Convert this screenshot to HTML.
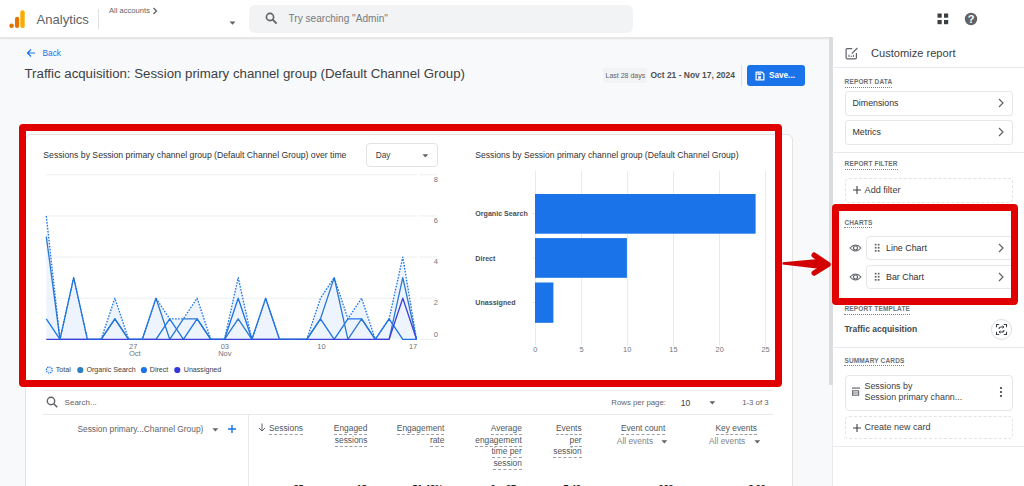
<!DOCTYPE html>
<html><head><meta charset="utf-8">
<style>
*{box-sizing:border-box;margin:0;padding:0}
html,body{width:1024px;height:486px;overflow:hidden;background:#f8f9fa;font-family:"Liberation Sans",sans-serif;color:#202124}
.a{position:absolute}
.t{position:absolute;white-space:nowrap;line-height:1}
#top{left:0;top:0;width:1024px;height:38px;background:#fff;border-bottom:1px solid #e6e6e6;box-shadow:0 1px 1.5px rgba(60,64,67,0.12)}
#card{left:25px;top:134px;width:768px;height:400px;background:#fff;border:1px solid #e3e3e3;border-radius:6px}
#panel{left:832px;top:37px;width:192px;height:449px;background:#fff}
.pcard{position:absolute;left:845px;width:168px;height:24.5px;border:1px solid #e6e6e6;border-radius:3px;background:#fff}
.dash{position:absolute;left:845px;width:168px;height:24.5px;border:1px dashed #e3e3e3;border-radius:4px}
.sec{position:absolute;font-size:6.5px;font-weight:700;letter-spacing:0.15px;color:#6b7075;line-height:1;white-space:nowrap;border-bottom:1px dotted #80868b;padding-bottom:1px}
.hd{position:absolute;font-size:8.4px;color:#50555a;line-height:11.6px;text-align:right;white-space:nowrap}
.hd span{border-bottom:1px dashed #9aa0a6;padding-bottom:1px}
</style></head><body>
<!-- top bar -->
<div id="top" class="a"></div>
<svg class="a" style="left:0;top:0" width="30" height="36">
  <circle cx="11.6" cy="25.8" r="2.3" fill="#e37400"/>
  <rect x="15" y="16.8" width="4.2" height="11.3" rx="2.1" fill="#e37400"/>
  <rect x="20.3" y="10.2" width="4.4" height="17.9" rx="2.2" fill="#f9ab00"/>
</svg>
<div class="t" style="left:36.5px;top:12.8px;font-size:13.1px;color:#5f6368">Analytics</div>
<div class="a" style="left:98px;top:9px;width:1px;height:20px;background:#e0e0e0"></div>
<div class="t" style="left:109px;top:6.5px;font-size:7.6px;color:#5f6368">All accounts</div>
<svg class="a" style="left:152px;top:6.5px" width="6" height="8"><path d="M1.5,1 L4.5,4 L1.5,7" fill="none" stroke="#5f6368" stroke-width="1.3"/></svg>
<svg class="a" style="left:228.6px;top:21px" width="8" height="5"><path d="M0.5,0.5 L6.5,0.5 L3.5,3.7 Z" fill="#5f6368"/></svg>
<div class="a" style="left:249px;top:5px;width:384px;height:28px;background:#f1f3f4;border-radius:6px"></div>
<svg class="a" style="left:265px;top:12px" width="13" height="13"><circle cx="5" cy="5" r="3.6" fill="none" stroke="#5f6368" stroke-width="1.6"/><path d="M7.7,7.7 L11.6,11.6" stroke="#5f6368" stroke-width="1.8"/></svg>
<div class="t" style="left:288.5px;top:13.5px;font-size:10.1px;color:#757a80">Try searching "Admin"</div>
<svg class="a" style="left:936.6px;top:13px" width="12" height="12" fill="#3c4043"><rect x="0.5" y="0.5" width="4.2" height="4.2"/><rect x="7" y="0.5" width="4.2" height="4.2"/><rect x="0.5" y="7" width="4.2" height="4.2"/><rect x="7" y="7" width="4.2" height="4.2"/></svg>
<svg class="a" style="left:964px;top:12px" width="14" height="14"><circle cx="7" cy="7" r="6.2" fill="#5f6368"/><text x="7" y="11" text-anchor="middle" font-size="11" font-weight="700" fill="#fff" font-family="Liberation Sans">?</text></svg>

<!-- header -->
<svg class="a" style="left:26px;top:47.8px" width="10" height="10"><path d="M9,5 L1.5,5 M5,1.5 L1.5,5 L5,8.5" fill="none" stroke="#1a73e8" stroke-width="1.2"/></svg>
<div class="t" style="left:42.5px;top:48.9px;font-size:8.3px;color:#1a73e8">Back</div>
<div class="t" style="left:24.5px;top:66.5px;font-size:13.25px;color:#3c4043">Traffic acquisition: Session primary channel group (Default Channel Group)</div>
<div class="a" style="left:603px;top:68px;width:44px;height:14.5px;background:#f1f3f4;border-radius:2px"></div>
<div class="t" style="left:605.5px;top:72.3px;font-size:7px;color:#5f6368">Last 28 days</div>
<div class="t" style="left:650.5px;top:71.2px;font-size:8.45px;font-weight:700;color:#4d5156">Oct 21 - Nov 17, 2024</div>
<div class="a" style="left:741px;top:65px;width:1px;height:21px;background:#e0e0e0"></div>
<div class="a" style="left:747px;top:65px;width:57.5px;height:21px;background:#1a73e8;border-radius:3px"></div>
<svg class="a" style="left:754.5px;top:70.5px" width="10" height="10"><path d="M1.1,1.1 H7 L8.9,3 V8.9 H1.1 Z" fill="none" stroke="#fff" stroke-width="1.25" stroke-linejoin="round"/><rect x="2.3" y="2.3" width="4" height="1.6" fill="#fff"/><rect x="3.1" y="5.2" width="2.8" height="2.6" fill="#fff"/></svg>
<div class="t" style="left:769px;top:71.6px;font-size:8.2px;font-weight:700;color:#fff">Save...</div>

<!-- main card -->
<div id="card" class="a"></div>
<div class="t" style="left:43.3px;top:151px;font-size:8.66px;color:#303134">Sessions by Session primary channel group (Default Channel Group) over time</div>
<div class="a" style="left:366px;top:143.3px;width:71.5px;height:23.7px;border:1px solid #e3e3e3;border-radius:4px;background:#fff"></div>
<div class="t" style="left:375.7px;top:151px;font-size:8.3px;color:#3c4043">Day</div>
<svg class="a" style="left:422px;top:154px" width="7" height="4"><path d="M0.5,0.3 L6.2,0.3 L3.35,3.5 Z" fill="#5f6368"/></svg>

<svg class="a" style="left:0;top:0" width="1024" height="486">
  <g stroke="#eceef0" stroke-width="1">
    <path d="M46,174.8 H417 M419.5,174.8 H437 M46,215.9 H417 M419.5,215.9 H437 M46,257 H417 M419.5,257 H437 M46,298.2 H417 M419.5,298.2 H437 M419.5,339.5 H437"/>
  </g>
  <path d="M46.3,216.0 L60.0,339.3 L73.7,277.6 L87.4,339.3 L101.1,339.3 L114.9,298.2 L128.6,339.3 L142.3,339.3 L156.0,298.2 L169.7,318.8 L183.4,318.8 L197.1,298.2 L210.8,339.3 L224.5,339.3 L238.2,277.6 L251.9,339.3 L265.7,298.2 L279.4,339.3 L293.1,339.3 L306.8,339.3 L320.5,298.2 L334.2,277.6 L347.9,318.8 L361.6,298.2 L375.3,339.3 L389.1,318.8 L402.8,257.1 L416.5,339.3 L416.5,339.3 L46.3,339.3 Z" fill="#e8f0fe" fill-opacity="0.75"/>
  <g fill="none" stroke-width="1.3" stroke-linejoin="round">
  <path stroke="#1a73e8" d="M46.3,318.8 L60.0,339.3 L73.7,339.3 L87.4,339.3 L101.1,339.3 L114.9,318.8 L128.6,339.3 L142.3,339.3 L156.0,339.3 L169.7,318.8 L183.4,339.3 L197.1,318.8 L210.8,339.3 L224.5,339.3 L238.2,298.2 L251.9,339.3 L265.7,339.3 L279.4,339.3 L293.1,339.3 L306.8,339.3 L320.5,318.8 L334.2,339.3 L347.9,318.8 L361.6,318.8 L375.3,339.3 L389.1,318.8 L402.8,339.3 L416.5,339.3"/>
  <path stroke="#2a78cf" d="M46.3,236.6 L60.0,339.3 L73.7,277.6 L87.4,339.3 L101.1,339.3 L114.9,318.8 L128.6,339.3 L142.3,339.3 L156.0,298.2 L169.7,339.3 L183.4,318.8 L197.1,318.8 L210.8,339.3 L224.5,339.3 L238.2,318.8 L251.9,339.3 L265.7,298.2 L279.4,339.3 L293.1,339.3 L306.8,339.3 L320.5,318.8 L334.2,277.6 L347.9,339.3 L361.6,318.8 L375.3,339.3 L389.1,339.3 L402.8,277.6 L416.5,339.3"/>
  <path stroke="#3d3fd8" d="M46.3,339.3 L389.1,339.3 L402.8,298.2 L416.5,339.3"/>
  <path stroke="#1a73e8" stroke-dasharray="1.6 1.4" d="M46.3,216.0 L60.0,339.3 L73.7,277.6 L87.4,339.3 L101.1,339.3 L114.9,298.2 L128.6,339.3 L142.3,339.3 L156.0,298.2 L169.7,318.8 L183.4,318.8 L197.1,298.2 L210.8,339.3 L224.5,339.3 L238.2,277.6 L251.9,339.3 L265.7,298.2 L279.4,339.3 L293.1,339.3 L306.8,339.3 L320.5,298.2 L334.2,277.6 L347.9,318.8 L361.6,298.2 L375.3,339.3 L389.1,318.8 L402.8,257.1 L416.5,339.3"/>
  </g>
  <g font-family="Liberation Sans" font-size="7.5" fill="#70757a">
    <text x="438" y="181.7" text-anchor="end">8</text>
    <text x="438" y="222.7" text-anchor="end">6</text>
    <text x="438" y="263.9" text-anchor="end">4</text>
    <text x="438" y="305.1" text-anchor="end">2</text>
    <text x="438" y="337.4" text-anchor="end">0</text>
    <text x="129" y="349.1">27</text>
    <text x="129" y="356.3">Oct</text>
    <text x="224.8" y="349.1" text-anchor="middle">03</text>
    <text x="224.8" y="356.3" text-anchor="middle">Nov</text>
    <text x="321.4" y="349.1" text-anchor="middle">10</text>
    <text x="417.3" y="349.1" text-anchor="end">17</text>
  </g>
  <!-- bar chart -->
  <g stroke="#e8eaed" stroke-width="1">
    <path d="M535.5,171 V345.5 M581.5,171 V345.5 M627.5,171 V345.5 M673.5,171 V345.5 M719.5,171 V345.5 M765.5,171 V345.5"/>
    <path d="M531.5,213.5 H535 M531.5,258 H535 M531.5,302.5 H535"/>
  </g>
  <g fill="#1a73e8">
    <rect x="535" y="194" width="220.6" height="39.7"/>
    <rect x="535" y="238.1" width="91.9" height="39.7"/>
    <rect x="535" y="282.5" width="18.4" height="40.3"/>
  </g>
  <g font-family="Liberation Sans" font-size="7.4" fill="#70757a" text-anchor="middle">
    <text x="535.4" y="352.2">0</text><text x="581.5" y="352.2">5</text><text x="627.2" y="352.2">10</text><text x="673.4" y="352.2">15</text><text x="719.7" y="352.2">20</text><text x="765.6" y="352.2">25</text>
  </g>
  <g font-family="Liberation Sans" font-size="7.1" font-weight="700" fill="#4a4e53">
    <text x="475.3" y="216">Organic Search</text>
    <text x="475.3" y="260.6">Direct</text>
    <text x="475.3" y="305">Unassigned</text>
  </g>
</svg>
<div class="t" style="left:475.3px;top:151px;font-size:8.6px;color:#303134">Sessions by Session primary channel group (Default Channel Group)</div>

<!-- legend -->
<svg class="a" style="left:44px;top:364px" width="150" height="12">
  <circle cx="5.3" cy="6" r="3" fill="#e8f0fe" stroke="#1a73e8" stroke-width="1.2" stroke-dasharray="1.4 0.9"/>
  <circle cx="36.3" cy="6" r="3.1" fill="#2a7ec2"/>
  <circle cx="99.9" cy="6" r="3.1" fill="#1a73e8"/>
  <circle cx="133.3" cy="6" r="3.1" fill="#3535e0"/>
</svg>
<div class="t" style="left:55.8px;top:366.5px;font-size:7.1px;color:#3c4043">Total</div>
<div class="t" style="left:86.4px;top:366.5px;font-size:7.1px;color:#3c4043">Organic Search</div>
<div class="t" style="left:149.8px;top:366.5px;font-size:7.1px;color:#3c4043">Direct</div>
<div class="t" style="left:183.8px;top:366.5px;font-size:7.1px;color:#3c4043">Unassigned</div>

<!-- table -->
<div class="a" style="left:43px;top:390px;width:730px;height:1px;background:#e8eaed"></div>
<div class="a" style="left:43px;top:414px;width:730px;height:1px;background:#e8eaed"></div>
<div class="a" style="left:248px;top:415px;width:1px;height:80px;background:#e8eaed"></div>
<svg class="a" style="left:46px;top:396px" width="13" height="13"><circle cx="5" cy="5" r="3.7" fill="none" stroke="#5f6368" stroke-width="1.4"/><path d="M7.7,7.7 L11.3,11.3" stroke="#5f6368" stroke-width="1.6"/></svg>
<div class="t" style="left:64.6px;top:398.5px;font-size:8px;color:#5f6368">Search...</div>
<div class="t" style="left:611.3px;top:399.2px;font-size:7.8px;color:#5f6368">Rows per page:</div>
<div class="t" style="left:680.7px;top:398.6px;font-size:8.6px;color:#3c4043">10</div>
<svg class="a" style="left:709px;top:400.5px" width="7" height="4"><path d="M0.5,0.3 L6.2,0.3 L3.35,3.5 Z" fill="#5f6368"/></svg>
<div class="t" style="left:742.2px;top:399.2px;font-size:7.8px;color:#5f6368">1-3 of 3</div>

<div class="t" style="left:77.4px;top:425.3px;font-size:8.4px;color:#5f6368">Session primary...Channel Group)</div>
<svg class="a" style="left:211.5px;top:428px" width="7" height="4"><path d="M0.5,0.3 L6.2,0.3 L3.35,3.5 Z" fill="#5f6368"/></svg>
<svg class="a" style="left:227px;top:424px" width="10" height="10"><path d="M5,1 V9 M1,5 H9" stroke="#1a73e8" stroke-width="1.4"/></svg>

<svg class="a" style="left:258px;top:423px" width="8" height="9"><path d="M4,0.5 V8 M1,5 L4,8 L7,5" fill="none" stroke="#5f6368" stroke-width="1"/></svg>
<div class="hd" style="left:269px;top:423px;text-align:left"><span>Sessions</span></div>
<div class="hd" style="right:656.6px;top:423px">
<span>Engaged</span><br><span>sessions</span></div>
<div class="hd" style="right:579.7px;top:423px"><span>Engagement</span><br><span>rate</span></div>
<div class="hd" style="right:502.2px;top:423px"><span>Average</span><br><span>engagement</span><br><span>time per</span><br><span>session</span></div>
<div class="hd" style="right:442.4px;top:423px"><span>Events</span><br><span>per</span><br><span>session</span></div>
<div class="hd" style="left:621px;top:423px"><span>Event count</span></div>
<div class="t" style="left:616.8px;top:436.8px;font-size:8.4px;color:#80868b">All events</div>
<svg class="a" style="left:660.5px;top:439.5px" width="7" height="4"><path d="M0.5,0.3 L6.2,0.3 L3.35,3.5 Z" fill="#5f6368"/></svg>
<div class="hd" style="left:715.5px;top:423px"><span>Key events</span></div>
<div class="t" style="left:709px;top:436.8px;font-size:8.4px;color:#80868b">All events</div>
<svg class="a" style="left:753.5px;top:439.5px" width="7" height="4"><path d="M0.5,0.3 L6.2,0.3 L3.35,3.5 Z" fill="#5f6368"/></svg>
<div class="t" style="right:720.6px;top:484px;font-size:9px;font-weight:700;color:#202124">35</div>
<div class="t" style="right:657.3px;top:484px;font-size:9px;font-weight:700;color:#202124">18</div>
<div class="t" style="right:581.1px;top:484px;font-size:9px;font-weight:700;color:#202124">51.43%</div>
<div class="t" style="right:503px;top:484px;font-size:9px;font-weight:700;color:#202124">2m 27s</div>
<div class="t" style="right:443px;top:484px;font-size:9px;font-weight:700;color:#202124">7.49</div>
<div class="t" style="right:350.6px;top:484px;font-size:9px;font-weight:700;color:#202124">269</div>
<div class="t" style="right:258.3px;top:484px;font-size:9px;font-weight:700;color:#202124">3.00</div>

<!-- panel -->
<div id="panel" class="a"></div>
<div class="a" style="left:829px;top:37px;width:3.5px;height:348px;background:#dadce0"></div>
<div class="a" style="left:832px;top:385px;width:1px;height:101px;background:#e8eaed"></div>
<svg class="a" style="left:845px;top:47px" width="14" height="13"><path d="M7.2,1.6 H2.2 Q1.1,1.6 1.1,2.7 V10.8 Q1.1,11.9 2.2,11.9 H10.3 Q11.4,11.9 11.4,10.8 V6" fill="none" stroke="#5f6368" stroke-width="1.2"/><path d="M6.8,6.6 L12.4,1" stroke="#5f6368" stroke-width="1.2"/><path d="M4,10 V7.6 M6.2,10 V8.6 M8.4,10 V7.8" stroke="#5f6368" stroke-width="1"/></svg>
<div class="t" style="left:871px;top:47.9px;font-size:11.1px;color:#3c4043">Customize report</div>
<div class="a" style="left:832px;top:67px;width:192px;height:1px;background:#e8eaed"></div>
<div class="sec" style="left:844.6px;top:79.2px">REPORT DATA</div>
<div class="pcard" style="top:91px"></div>
<div class="t" style="left:852.5px;top:99.2px;font-size:8.8px;color:#303134">Dimensions</div>
<svg class="a" style="left:998px;top:97.5px" width="6" height="10"><path d="M1,1 L5,5 L1,9" fill="none" stroke="#5f6368" stroke-width="1.2"/></svg>
<div class="pcard" style="top:120px"></div>
<div class="t" style="left:852.5px;top:128.2px;font-size:8.8px;color:#303134">Metrics</div>
<svg class="a" style="left:998px;top:126.5px" width="6" height="10"><path d="M1,1 L5,5 L1,9" fill="none" stroke="#5f6368" stroke-width="1.2"/></svg>
<div class="a" style="left:832px;top:151.5px;width:192px;height:1px;background:#e8eaed"></div>
<div class="sec" style="left:844.6px;top:161.1px">REPORT FILTER</div>
<div class="dash" style="top:178px"></div>
<svg class="a" style="left:851.5px;top:185px" width="10" height="10"><path d="M5,1 V9 M1,5 H9" stroke="#3c4043" stroke-width="1.1"/></svg>
<div class="t" style="left:864.6px;top:186.2px;font-size:9.1px;color:#3c4043">Add filter</div>

<div class="sec" style="left:844.4px;top:219.6px">CHARTS</div>
<svg class="a" style="left:849px;top:243px" width="13" height="10"><path d="M1,5 Q6.5,-1 12,5 Q6.5,11 1,5 Z" fill="none" stroke="#5f6368" stroke-width="1.1"/><circle cx="6.5" cy="5" r="2" fill="none" stroke="#5f6368" stroke-width="1.1"/></svg>
<div class="a" style="left:866px;top:235.8px;width:150px;height:24.7px;border:1px solid #e6e6e6;border-radius:4px;background:#fff"></div>
<svg class="a" style="left:874px;top:243px" width="7" height="10" fill="#5f6368"><rect x="0.8" y="0.8" width="1.7" height="1.7"/><rect x="3.8" y="0.8" width="1.7" height="1.7"/><rect x="0.8" y="3.9" width="1.7" height="1.7"/><rect x="3.8" y="3.9" width="1.7" height="1.7"/><rect x="0.8" y="7" width="1.7" height="1.7"/><rect x="3.8" y="7" width="1.7" height="1.7"/></svg>
<div class="t" style="left:886px;top:244px;font-size:8.9px;color:#303134">Line Chart</div>
<svg class="a" style="left:998px;top:243px" width="6" height="10"><path d="M1,1 L5,5 L1,9" fill="none" stroke="#5f6368" stroke-width="1.2"/></svg>
<svg class="a" style="left:849px;top:272px" width="13" height="10"><path d="M1,5 Q6.5,-1 12,5 Q6.5,11 1,5 Z" fill="none" stroke="#5f6368" stroke-width="1.1"/><circle cx="6.5" cy="5" r="2" fill="none" stroke="#5f6368" stroke-width="1.1"/></svg>
<div class="a" style="left:866px;top:264.8px;width:150px;height:24.5px;border:1px solid #e6e6e6;border-radius:4px;background:#fff"></div>
<svg class="a" style="left:874px;top:272px" width="7" height="10" fill="#5f6368"><rect x="0.8" y="0.8" width="1.7" height="1.7"/><rect x="3.8" y="0.8" width="1.7" height="1.7"/><rect x="0.8" y="3.9" width="1.7" height="1.7"/><rect x="3.8" y="3.9" width="1.7" height="1.7"/><rect x="0.8" y="7" width="1.7" height="1.7"/><rect x="3.8" y="7" width="1.7" height="1.7"/></svg>
<div class="t" style="left:886px;top:273px;font-size:8.9px;color:#303134">Bar Chart</div>
<svg class="a" style="left:998px;top:272px" width="6" height="10"><path d="M1,1 L5,5 L1,9" fill="none" stroke="#5f6368" stroke-width="1.2"/></svg>

<div class="sec" style="left:844.4px;top:306.3px">REPORT TEMPLATE</div>
<div class="t" style="left:844.4px;top:325px;font-size:8.5px;font-weight:700;color:#44484d">Traffic acquisition</div>
<div class="a" style="left:991px;top:318.8px;width:21px;height:21px;border:1px solid #dadce0;border-radius:50%;background:#fff"></div>
<svg class="a" style="left:995px;top:322.8px" width="13" height="13"><path d="M1.5,4.2 V1.5 H4.2 M8.8,1.5 H11.5 V4.2 M11.5,8.8 V11.5 H8.8 M4.2,11.5 H1.5 V8.8" fill="none" stroke="#3c4043" stroke-width="1.1"/><path d="M4,6 Q4,4 6,4 H8.5 M9,7 Q9,9 7,9 H4.5" fill="none" stroke="#3c4043" stroke-width="1.1"/><path d="M7.5,2.8 L9,4 L7.5,5.2 M5.5,7.8 L4,9 L5.5,10.2" fill="none" stroke="#3c4043" stroke-width="1"/></svg>
<div class="a" style="left:832px;top:347px;width:192px;height:1px;background:#e8eaed"></div>
<div class="sec" style="left:844.4px;top:357.5px">SUMMARY CARDS</div>
<div class="a" style="left:845px;top:375px;width:168px;height:35.5px;border:1px solid #e6e6e6;border-radius:4px;background:#fff"></div>
<svg class="a" style="left:850px;top:386px" width="12" height="12"><path d="M2,2.1 H10" stroke="#6f7378" stroke-width="1.3"/><rect x="2.6" y="4.8" width="6" height="4.4" fill="none" stroke="#6f7378" stroke-width="1.2"/><path d="M2.6,7 H8.6" stroke="#6f7378" stroke-width="1"/></svg>
<div class="t" style="left:864.5px;top:381.5px;font-size:8.9px;color:#3c4043">Sessions by</div>
<div class="t" style="left:864.5px;top:393.2px;font-size:8.9px;color:#3c4043">Session primary chann...</div>
<svg class="a" style="left:999px;top:386px" width="4" height="12" fill="#3c4043"><circle cx="2" cy="2" r="1.1"/><circle cx="2" cy="6" r="1.1"/><circle cx="2" cy="10" r="1.1"/></svg>
<div class="dash" style="top:415.5px;height:23px"></div>
<svg class="a" style="left:851.5px;top:423px" width="10" height="10"><path d="M5,1 V9 M1,5 H9" stroke="#3c4043" stroke-width="1.1"/></svg>
<div class="t" style="left:864.5px;top:422.7px;font-size:9px;color:#3c4043">Create new card</div>
<div class="a" style="left:832px;top:446px;width:192px;height:1px;background:#e8eaed"></div>

<!-- red annotations -->
<div class="a" style="left:19.3px;top:124.4px;width:762.7px;height:262.5px;border:7px solid #e00000;border-radius:4px"></div>
<div class="a" style="left:832px;top:204.4px;width:185.6px;height:100.5px;border:7px solid #e00000;border-radius:4px"></div>
<svg class="a" style="left:0;top:0" width="1024" height="486">
  <path d="M782.5,262.2 L821,258.8 L827,264.5 L821,269 L782.5,264.6 Z" fill="#d20000"/>
  <path d="M814.2,255.2 L828,264.5 L814.2,273" fill="none" stroke="#d20000" stroke-width="5.4" stroke-linecap="round" stroke-linejoin="round"/>
</svg>
</body></html>
